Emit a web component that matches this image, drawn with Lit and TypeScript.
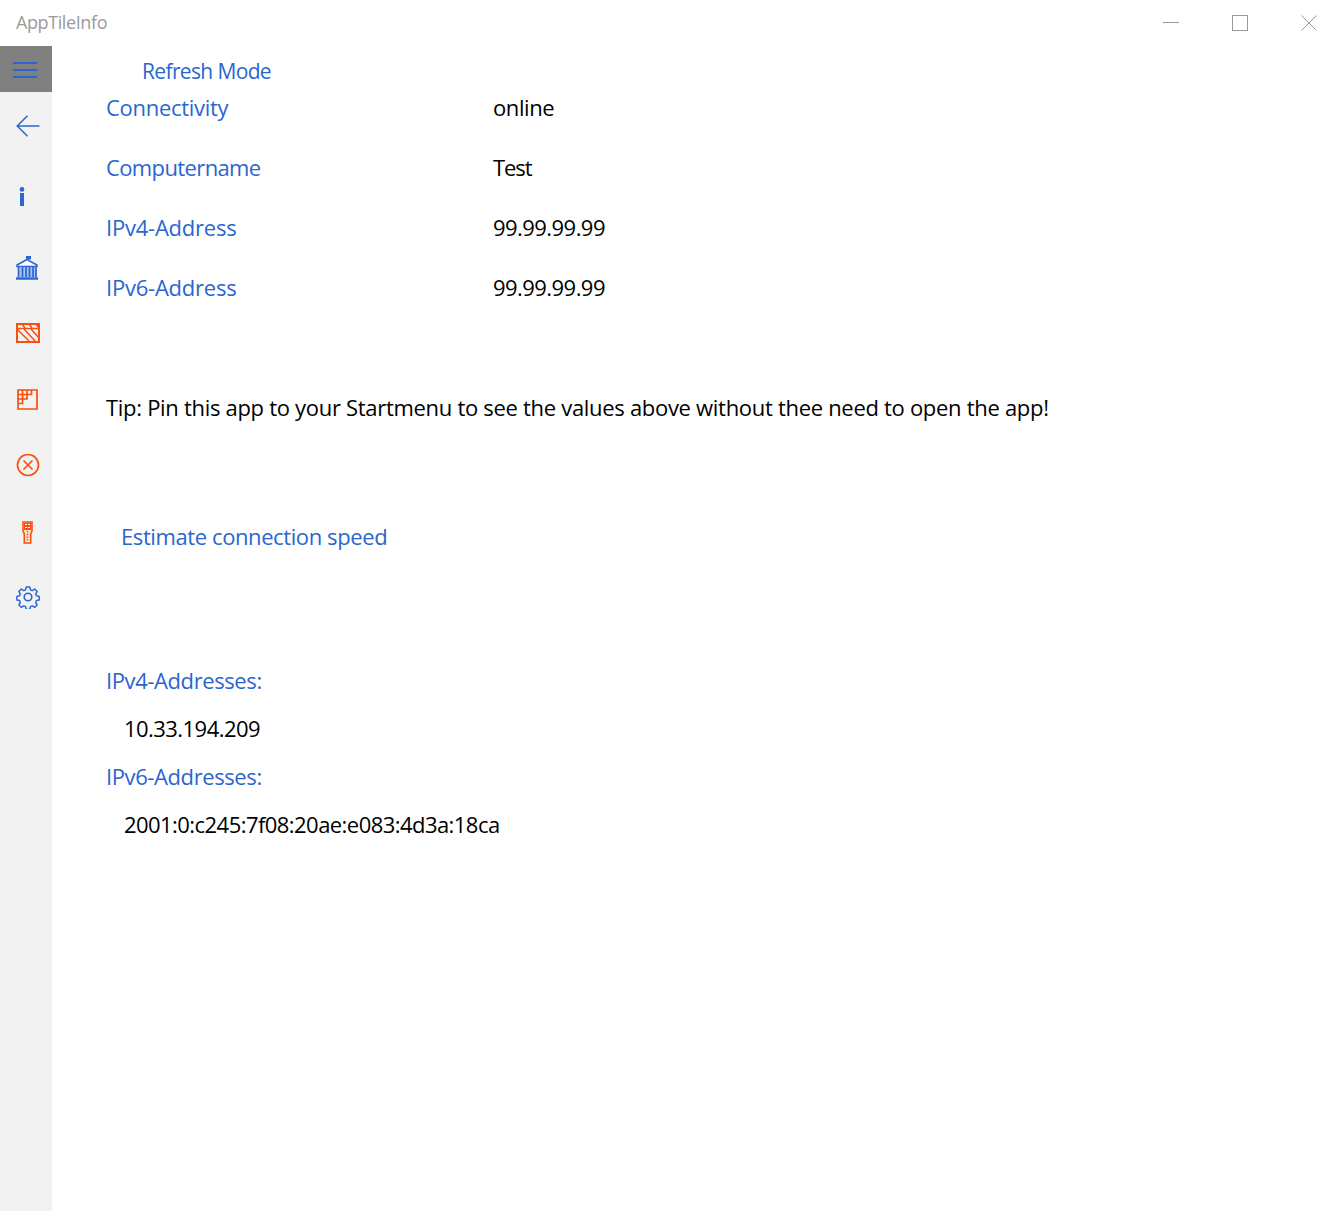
import { LitElement, html, css } from "lit";
import { customElement } from "lit/decorators.js";

const BLUE = "#2a66d0";
const ORANGE = "#f7500f";

@customElement("app-root")
export class AppRoot extends LitElement {
  static styles = css`
    :host {
      display: flex;
      flex-direction: column;
      width: 1338px;
      height: 1211px;
      background: #fff;
      font-family: "Open Sans", "Noto Sans", sans-serif;
      font-size: 22px;
      letter-spacing: -0.3px;
      color: #000;
      overflow: hidden;
    }
    .titlebar {
      display: flex;
      align-items: flex-start;
      justify-content: space-between;
      height: 46px;
      flex: none;
      padding-left: 16px;
    }
    .title { font-size: 18px; line-height: 45px; color: #9a9a9a; letter-spacing: -0.4px; }
    .controls { display: flex; margin-right: -5px; }
    .ctl { display: flex; align-items: center; justify-content: center; width: 69px; height: 45px; }
    .ctl svg { display: block; }
    .body { display: flex; flex: 1; min-height: 0; }
    .rail { width: 52px; flex: none; background: #f2f2f2; display: flex; flex-direction: column; }
    .burger { height: 46px; background: #808080; display: flex; align-items: center; justify-content: center; padding: 2px 2px 0 0; box-sizing: border-box; }
    .item { display: flex; align-items: center; justify-content: center; padding-left: 3px; box-sizing: border-box; }
    .item svg { display: block; }
    .h72 { height: 72px; }
    .h68 { height: 68px; }
    .h66 { height: 66px; }
    .shift-info { padding: 0 8px 0 0; }
    .shift-bank { padding: 3px 0 0 2px; }
    main { flex: 1; padding-left: 54px; display: flex; flex-direction: column; }
    .link { color: #2a66d0; }
    .refresh { height: 50px; line-height: 50px; padding-left: 36px; font-size: 21px; letter-spacing: -0.64px; flex: none; }
    .rows { display: grid; grid-template-columns: 387px 1fr; grid-auto-rows: 60px; margin-top: -19px; flex: none; }
    .rows > div { line-height: 60px; height: 60px; }
    .tip { margin-top: 60px; height: 60px; line-height: 60px; }
    .estimate { margin-top: 69px; padding-left: 15px; height: 60px; line-height: 60px; }
    .addrs { margin-top: 90px; display: flex; flex-direction: column; }
    .addrs div { height: 48px; line-height: 48px; }
    .val { padding-left: 18px; }
    .mid { letter-spacing: -0.4px; }
    .tight { letter-spacing: -0.55px; }
    .tighter { letter-spacing: -0.62px; }
    .xtight { letter-spacing: -1.1px; }
    .loose { letter-spacing: -0.22px; }
  `;

  private rows = [
    ["Connectivity", "", "online", "mid"],
    ["Computername", "tighter", "Test", "xtight"],
    ["IPv4-Address", "loose", "99.99.99.99", "tight"],
    ["IPv6-Address", "loose", "99.99.99.99", "tight"],
  ];

  render() {
    return html`
      <div class="titlebar">
        <span class="title">AppTileInfo</span>
        <div class="controls">
          <div class="ctl"><svg width="16" height="16" viewBox="0 0 16 16"><path d="M0 7.500h16" stroke="#999" fill="none"/></svg></div>
          <div class="ctl"><svg width="16" height="16" viewBox="0 0 16 16"><rect x=".5" y=".5" width="15" height="15" stroke="#999" fill="none"/></svg></div>
          <div class="ctl"><svg width="16" height="16" viewBox="0 0 16 16"><path d="M.5.5l15 15M15.500.5l-15 15" stroke="#999" fill="none"/></svg></div>
        </div>
      </div>
      <div class="body">
        <nav class="rail">
          <div class="burger"><svg width="24" height="18" viewBox="0 0 24 18"><path d="M0 2h24M0 9h24M0 16h24" stroke="${BLUE}" stroke-width="2" fill="none"/></svg></div>
          <div class="item h68"><svg width="24" height="22" viewBox="0 0 24 22"><path d="M11.500.7 1.200 11l10.300 10.300M1.500 11H23.500" stroke="${BLUE}" stroke-width="1.500" fill="none"/></svg></div>
          <div class="item h72 shift-info"><svg width="6" height="19" viewBox="0 0 6 19"><circle cx="3" cy="2.400" r="2.300" fill="${BLUE}"/><rect x="1" y="6" width="4" height="13" fill="${BLUE}"/></svg></div>
          <div class="item h68 shift-bank"><svg width="22" height="24" viewBox="0 0 22 24">
            <path d="M10 0h5v3.500h-5z" fill="${BLUE}"/><path d="M11 3.500 1 9v1.500h20V9z" fill="#fbfbff" stroke="${BLUE}" stroke-width="1.500"/>
            <path d="M2 11h18v10H2z" fill="#a9c2ee"/>
            <path d="M2.500 11v10M6.500 11v10M10 11v10M13.500 11v10M17 11v10M20 11v10" stroke="${BLUE}" stroke-width="1.700"/>
            <path d="M0 22.500h22" stroke="${BLUE}" stroke-width="2.500"/></svg></div>
          <div class="item h66"><svg width="24" height="20" viewBox="0 0 24 20">
            <rect x="1" y="1" width="22" height="18" fill="none" stroke="${ORANGE}" stroke-width="2"/>
            <path d="M1 5.500h22" stroke="${ORANGE}" stroke-width="1.500"/>
            <path d="M6 1l3 4M13 1l3 4M20 1l3 4M2 7l11 11M8 6l11 12M15 6l8 9" stroke="${ORANGE}" stroke-width="1.500" fill="none"/></svg></div>
          <div class="item h66"><svg width="21" height="21" viewBox="0 0 21 21" fill="none" stroke="${ORANGE}" stroke-width="1.700">
            <path d="M1 1h19v19H1z"/><path d="M5.500 1v4.500H1M10 1v4.500M14.500 1v4.500H10V10H5.500v4.500H1M5.500 5.500H10M5.500 5.500V10M1 10h4.500"/></svg></div>
          <div class="item h66"><svg width="24" height="24" viewBox="0 0 24 24" fill="none" stroke="${ORANGE}" stroke-width="1.700"><circle cx="12" cy="12" r="10.500"/><path d="M7.500 7.500l9 9M16.500 7.500l-9 9"/></svg></div>
          <div class="item h66 shift-bank"><svg width="11" height="23" viewBox="0 0 11 23">
            <path d="M1 1h9v9l-1.300 3v9H2.300v-9L1 10z" fill="#fde3d6" stroke="${ORANGE}" stroke-width="1.600"/>
            <path d="M2 2h7v7H2z" fill="${ORANGE}"/>
            <path d="M3 3.500h2M6 3.500h2M3 6.500h2M6 6.500h2" stroke="#fff" stroke-width="1.200" fill="none"/>
            <path d="M5.500 10v10.500" stroke="${ORANGE}" stroke-width="1.500" stroke-dasharray="1.500 1.200" fill="none"/></svg></div>
          <div class="item h66"><svg width="24" height="24" viewBox="0 0 24 24" fill="none" stroke="${BLUE}" stroke-width="1.600">
            <path d="M10 1h4l.6 3 2.100.9 2.600-1.700 2.800 2.800-1.700 2.600.9 2.100 3 .6v4l-3 .6-.9 2.100 1.700 2.600-2.800 2.800-2.600-1.700-2.100.9-.6 3h-4l-.6-3-2.100-.9-2.600 1.700-2.800-2.800 1.700-2.600-.9-2.100-3-.6v-4l3-.6.9-2.100-1.700-2.600 2.800-2.800 2.600 1.700 2.100-.9z" stroke-linejoin="round" transform="translate(1.100 1.100) scale(.91)"/><circle cx="12" cy="12" r="3.800"/></svg></div>
        </nav>
        <main>
          <div class="refresh link">Refresh Mode</div>
          <div class="rows">
            ${this.rows.map(
              ([k, kc, v, vc]) => html`<div class="link ${kc}">${k}</div><div class="${vc}">${v}</div>`
            )}
          </div>
          <div class="tip">Tip: Pin this app to your Startmenu to see the values above without thee need to open the app!</div>
          <div class="estimate link mid">Estimate connection speed</div>
          <div class="addrs">
            <div class="link mid">IPv4-Addresses:</div>
            <div class="val tight">10.33.194.209</div>
            <div class="link mid">IPv6-Addresses:</div>
            <div class="val tight">2001:0:c245:7f08:20ae:e083:4d3a:18ca</div>
          </div>
        </main>
      </div>
    `;
  }
}
